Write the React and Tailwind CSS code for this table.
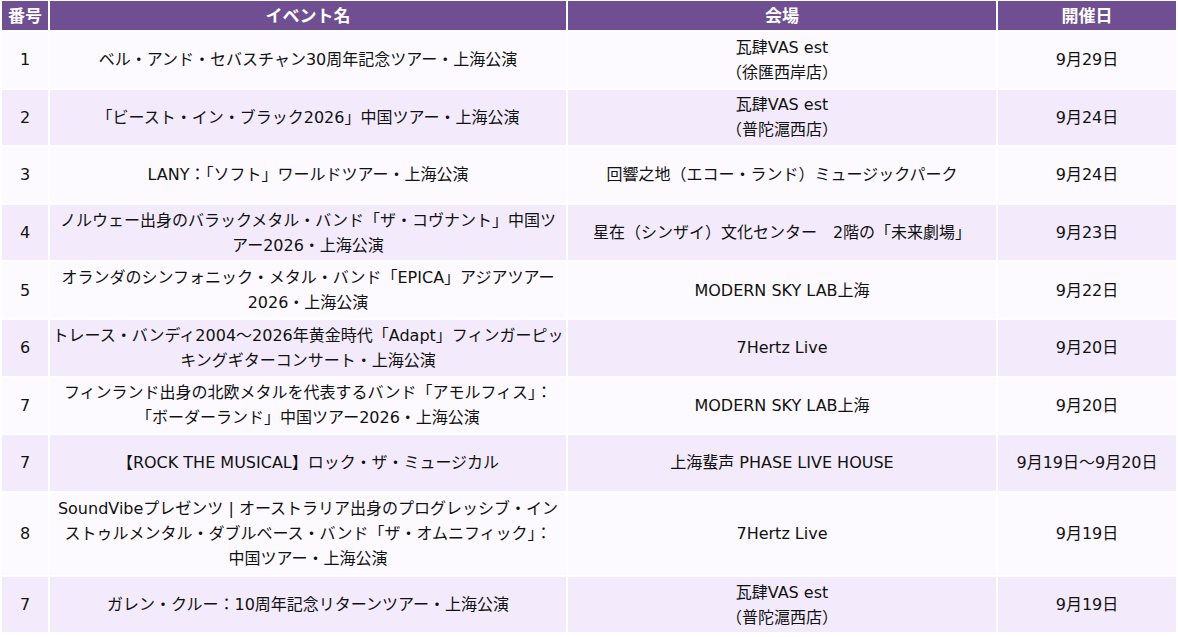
const rows = [
  { no: "1", name: ["ベル・アンド・セバスチャン30周年記念ツアー・上海公演"], venue: ["瓦肆VAS est", "（徐匯西岸店）"], date: "9月29日" },
  { no: "2", name: ["「ビースト・イン・ブラック2026」中国ツアー・上海公演"], venue: ["瓦肆VAS est", "（普陀滬西店）"], date: "9月24日" },
  { no: "3", name: ["LANY：「ソフト」ワールドツアー・上海公演"], venue: ["回響之地（エコー・ランド）ミュージックパーク"], date: "9月24日" },
  { no: "4", name: ["ノルウェー出身のバラックメタル・バンド「ザ・コヴナント」中国ツ", "アー2026・上海公演"], venue: ["星在（シンザイ）文化センター　2階の「未来劇場」"], date: "9月23日" },
  { no: "5", name: ["オランダのシンフォニック・メタル・バンド「EPICA」アジアツアー", "2026・上海公演"], venue: ["MODERN SKY LAB上海"], date: "9月22日" },
  { no: "6", name: ["トレース・バンディ2004～2026年黄金時代「Adapt」フィンガーピッ", "キングギターコンサート・上海公演"], venue: ["7Hertz Live"], date: "9月20日" },
  { no: "7", name: ["フィンランド出身の北欧メタルを代表するバンド「アモルフィス」：", "「ボーダーランド」中国ツアー2026・上海公演"], venue: ["MODERN SKY LAB上海"], date: "9月20日" },
  { no: "7", name: ["【ROCK THE MUSICAL】ロック・ザ・ミュージカル"], venue: ["上海蜚声 PHASE LIVE HOUSE"], date: "9月19日～9月20日" },
  { no: "8", name: ["SoundVibeプレゼンツ | オーストラリア出身のプログレッシブ・イン", "ストゥルメンタル・ダブルベース・バンド「ザ・オムニフィック」：", "中国ツアー・上海公演"], venue: ["7Hertz Live"], date: "9月19日" },
  { no: "7", name: ["ガレン・クルー：10周年記念リターンツアー・上海公演"], venue: ["瓦肆VAS est", "（普陀滬西店）"], date: "9月19日" },
];

function Lines({ lines }) {
  return lines.map((l, i) => (
    <span key={i} className="block whitespace-nowrap">
      {l}
    </span>
  ));
}

export default function App() {
  return (
    <div
      className="w-[1178px] h-[637px] bg-white text-[16px] leading-[25px] text-[#111] overflow-hidden"
      style={{ fontFamily: '"DejaVu Sans", "Noto Sans CJK JP", sans-serif' }}
    >
      <table className="table-fixed border-separate border-spacing-[2px] w-[1178px] -mt-[1px]">
        <colgroup>
          <col className="w-[46px]" />
          <col className="w-[516px]" />
          <col className="w-[428px]" />
          <col />
        </colgroup>
        <thead>
          <tr className="h-[29px] bg-[#6f4e91] text-white text-[17px] leading-[22px]">
            <th className="p-0 font-bold">番号</th>
            <th className="p-0 font-bold">イベント名</th>
            <th className="p-0 font-bold">会場</th>
            <th className="p-0 font-bold">開催日</th>
          </tr>
        </thead>
        <tbody>
          {rows.map((r, i) => (
            <tr
              key={i}
              className={
                (i % 2 === 0 ? "bg-[#fcfaff] " : "bg-[#f3ebfb] ") +
                (r.name.length > 2 ? "h-[82px]" : "h-[55.6px]")
              }
            >
              <td className="text-center align-middle px-0 py-0">{r.no}</td>
              <td className="text-center align-middle px-0 py-0 overflow-visible">
                <Lines lines={r.name} />
              </td>
              <td className="text-center align-middle px-0 py-0">
                <Lines lines={r.venue} />
              </td>
              <td className="text-center align-middle px-0 py-0 whitespace-nowrap">{r.date}</td>
            </tr>
          ))}
        </tbody>
      </table>
    </div>
  );
}
